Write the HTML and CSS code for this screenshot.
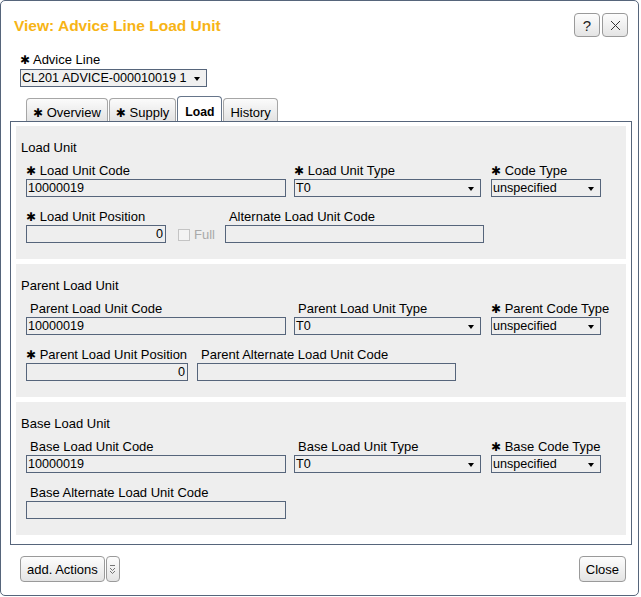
FILE: index.html
```html
<!DOCTYPE html>
<html>
<head>
<meta charset="utf-8">
<title>View: Advice Line Load Unit</title>
<link rel="stylesheet" href="styles.css">
</head>
<body>
<div class="dialog">
  <div class="header">
    <h1 class="title">View: Advice Line Load Unit</h1>
    <div class="hbtns">
      <button class="btn hbtn help">?</button>
      <button class="btn hbtn"><svg width="11" height="11" viewBox="0 0 11 11"><path d="M1 1L10 10M10 1L1 10" stroke="#333" stroke-width="1" fill="none"/></svg></button>
    </div>
  </div>

  <div class="advice">
    <div class="label plain"><span class="req">✱</span> Advice Line</div>
    <div class="select advice-select">CL201 ADVICE-000010019 1</div>
  </div>

  <div class="tabs">
    <div class="tab"><span class="req">✱</span> Overview</div>
    <div class="tab"><span class="req">✱</span> Supply</div>
    <div class="tab active">Load</div>
    <div class="tab">History</div>
  </div>

  <div class="panel">
    <section class="group">
      <div class="group-title">Load Unit</div>
      <div class="row">
        <div class="field c1"><div class="label"><span class="req">✱</span> Load Unit Code</div><input class="input" readonly value="10000019"></div>
        <div class="field c2"><div class="label"><span class="req">✱</span> Load Unit Type</div><div class="select">T0</div></div>
        <div class="field c3"><div class="label"><span class="req">✱</span> Code Type</div><div class="select">unspecified</div></div>
      </div>
      <div class="row">
        <div class="field w140"><div class="label"><span class="req">✱</span> Load Unit Position</div><input class="input num" readonly value="0"></div>
        <div class="check"><span class="box"></span><span class="check-text">Full</span></div>
        <div class="field alt1"><div class="label opt">Alternate Load Unit Code</div><input class="input" readonly value=""></div>
      </div>
    </section>

    <section class="group">
      <div class="group-title">Parent Load Unit</div>
      <div class="row">
        <div class="field c1"><div class="label opt">Parent Load Unit Code</div><input class="input" readonly value="10000019"></div>
        <div class="field c2"><div class="label opt">Parent Load Unit Type</div><div class="select">T0</div></div>
        <div class="field c3"><div class="label"><span class="req">✱</span> Parent Code Type</div><div class="select">unspecified</div></div>
      </div>
      <div class="row">
        <div class="field w162"><div class="label"><span class="req">✱</span> Parent Load Unit Position</div><input class="input num" readonly value="0"></div>
        <div class="field alt2"><div class="label opt">Parent Alternate Load Unit Code</div><input class="input" readonly value=""></div>
      </div>
    </section>

    <section class="group">
      <div class="group-title">Base Load Unit</div>
      <div class="row">
        <div class="field c1"><div class="label opt">Base Load Unit Code</div><input class="input" readonly value="10000019"></div>
        <div class="field c2"><div class="label opt">Base Load Unit Type</div><div class="select">T0</div></div>
        <div class="field c3"><div class="label"><span class="req">✱</span> Base Code Type</div><div class="select">unspecified</div></div>
      </div>
      <div class="row">
        <div class="field w260"><div class="label opt">Base Alternate Load Unit Code</div><input class="input" readonly value=""></div>
      </div>
    </section>
  </div>

  <div class="footer">
    <div class="actions">
      <button class="btn fbtn">add. Actions</button>
      <button class="btn more"><svg width="7" height="11" viewBox="0 0 7 11"><path d="M1 1.5H6M1 4l2.5 2.5L6 4M1 7l2.5 2.5L6 7" stroke="#666" stroke-width="0.9" fill="none"/></svg></button>
    </div>
    <button class="btn fbtn">Close</button>
  </div>
</div>
</body>
</html>
```

FILE: styles.css
```css
* { box-sizing: border-box; }

html, body {
  margin: 0;
  padding: 0;
  background: #ffffff;
}

body {
  font-family: "Liberation Sans", Arial, sans-serif;
  font-size: 13px;
  color: #000;
}

.dialog {
  width: 639px;
  height: 596px;
  border: 1px solid #56657b;
  border-radius: 5px;
  background: #fff;
}

.header {
  display: flex;
  align-items: center;
  justify-content: space-between;
  padding: 12px 10px 0 13px;
  height: 36px;
}

.title {
  margin: 0;
  padding-top: 1px;
  font-size: 15.5px;
  line-height: 18px;
  font-weight: bold;
  color: #f7b416;
}

.hbtns {
  display: flex;
  gap: 2px;
}

.btn {
  font-family: "Liberation Sans", Arial, sans-serif;
  font-size: 13px;
  color: #000;
  background: linear-gradient(#fdfdfd, #e4e4e4);
  border: 1px solid #9a9a9a;
  border-radius: 4px;
  padding: 0;
  margin: 0;
  display: flex;
  align-items: center;
  justify-content: center;
}

.hbtn {
  width: 26px;
  height: 24px;
}

.help {
  font-size: 15px;
  color: #222;
}

.advice {
  margin: 15px 0 0 19px;
}

.label {
  height: 16px;
  line-height: 16px;
  white-space: nowrap;
}

.label.opt {
  padding-left: 4px;
}

.req {
  font-family: "DejaVu Sans", sans-serif;
  font-size: 12px;
}

.advice .label {
  height: 17px;
}

.select {
  position: relative;
  height: 18px;
  line-height: 16px;
  border: 1px solid #56657b;
  background: #eeeeee;
  padding-left: 1px;
  font-size: 12.6px;
  white-space: nowrap;
}

.select::after {
  content: "";
  position: absolute;
  right: 6px;
  top: 7px;
  border-left: 3.5px solid transparent;
  border-right: 3.5px solid transparent;
  border-top: 4px solid #000;
}

.advice-select {
  width: 187px;
  background: #f0f0f0;
}

.tabs {
  display: flex;
  align-items: flex-end;
  gap: 1px;
  margin: 9px 0 0 25px;
  height: 25px;
}

.tab {
  height: 23px;
  padding: 6px 6px 0 6px;
  line-height: 15px;
  border: 1px solid #a6a6a6;
  border-bottom: none;
  border-radius: 4px 4px 0 0;
  background: linear-gradient(#fbfbfb, #e3e3e3);
  white-space: nowrap;
}

.tab.active {
  height: 25px;
  padding: 8px 7px 0 7px;
  font-size: 12.2px;
  font-weight: bold;
  background: #fff;
  border-color: #66758a;
}

.panel {
  margin-left: 9px;
  width: 622px;
  height: 424px;
  border: 1px solid #56657b;
  padding: 4px 5px 0 5px;
  display: flex;
  flex-direction: column;
  gap: 5px;
}

.group {
  height: 133px;
  background: #eeeeee;
  padding: 14px 5px 0 5px;
}

.group-title {
  line-height: 15px;
  margin-bottom: 8px;
}

.row {
  display: flex;
  align-items: flex-start;
  margin-left: 5px;
  margin-bottom: 12px;
}

.field {
  display: flex;
  flex-direction: column;
}

.c1 { width: 260px; margin-right: 8px; }
.c2 { width: 187px; margin-right: 10px; }
.c3 { width: 110px; }
.w140 { width: 140px; }
.w162 { width: 162px; margin-right: 9px; }
.w260 { width: 260px; }
.alt1 { width: 259px; margin-left: 10px; }
.alt2 { width: 259px; }

.input {
  display: block;
  width: 100%;
  height: 18px;
  margin: 0;
  padding: 0 2px 0 1px;
  font-family: "Liberation Sans", Arial, sans-serif;
  font-size: 12.6px;
  color: #000;
  border: 1px solid #56657b;
  background: #eeeeee;
  outline: none;
}

.input.num {
  text-align: right;
}

.check {
  display: flex;
  align-items: center;
  margin-top: 16px;
  height: 18px;
  margin-left: 12px;
}

.box {
  width: 12px;
  height: 12px;
  border: 1px solid #c4c4c4;
  background: #f3f3f3;
  margin-right: 4px;
  margin-top: 2px;
}

.check-text {
  color: #a9a9a9;
  margin-top: 1px;
}

.footer {
  display: flex;
  justify-content: space-between;
  align-items: center;
  margin-top: 11px;
  padding: 0 12px 0 19px;
}

.actions {
  display: flex;
  gap: 1px;
}

.fbtn {
  height: 26px;
  padding: 0 6px;
}

.more {
  width: 14px;
  height: 26px;
}
```
